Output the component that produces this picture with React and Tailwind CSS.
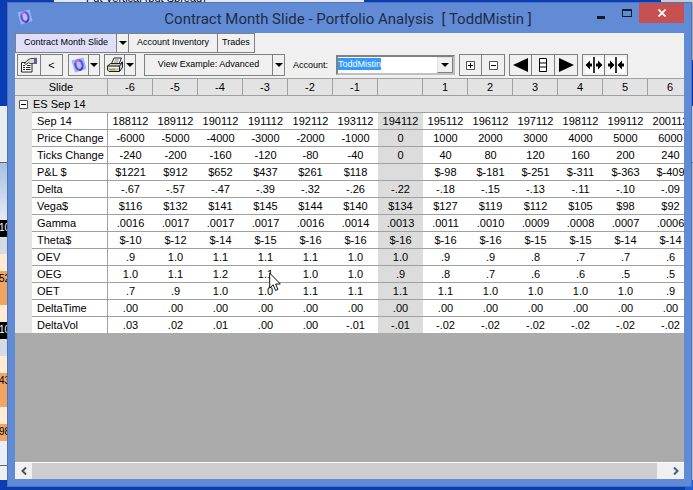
import { useState } from "react";

const SLIDES = ["-6", "-5", "-4", "-3", "-2", "-1", "", "1", "2", "3", "4", "5", "6"];

// Index of the current-price column, which is shaded
const CENTER = 6;

const ROWS = [
  { label: "Sep 14", values: ["188112", "189112", "190112", "191112", "192112", "193112", "194112", "195112", "196112", "197112", "198112", "199112", "200112"] },
  { label: "Price Change", values: ["-6000", "-5000", "-4000", "-3000", "-2000", "-1000", "0", "1000", "2000", "3000", "4000", "5000", "6000"] },
  { label: "Ticks Change", values: ["-240", "-200", "-160", "-120", "-80", "-40", "0", "40", "80", "120", "160", "200", "240"] },
  { label: "P&L $", values: ["$1221", "$912", "$652", "$437", "$261", "$118", "", "$-98", "$-181", "$-251", "$-311", "$-363", "$-409"] },
  { label: "Delta", values: ["-.67", "-.57", "-.47", "-.39", "-.32", "-.26", "-.22", "-.18", "-.15", "-.13", "-.11", "-.10", "-.09"] },
  { label: "Vega$", values: ["$116", "$132", "$141", "$145", "$144", "$140", "$134", "$127", "$119", "$112", "$105", "$98", "$92"] },
  { label: "Gamma", values: [".0016", ".0017", ".0017", ".0017", ".0016", ".0014", ".0013", ".0011", ".0010", ".0009", ".0008", ".0007", ".0006"] },
  { label: "Theta$", values: ["$-10", "$-12", "$-14", "$-15", "$-16", "$-16", "$-16", "$-16", "$-16", "$-15", "$-15", "$-14", "$-14"] },
  { label: "OEV", values: [".9", "1.0", "1.1", "1.1", "1.1", "1.0", "1.0", ".9", ".9", ".8", ".7", ".7", ".6"] },
  { label: "OEG", values: ["1.0", "1.1", "1.2", "1.1", "1.0", "1.0", ".9", ".8", ".7", ".6", ".6", ".5", ".5"] },
  { label: "OET", values: [".7", ".9", "1.0", "1.0", "1.1", "1.1", "1.1", "1.1", "1.0", "1.0", "1.0", "1.0", ".9"] },
  { label: "DeltaTime", values: [".00", ".00", ".00", ".00", ".00", ".00", ".00", ".00", ".00", ".00", ".00", ".00", ".00"] },
  { label: "DeltaVol", values: [".03", ".02", ".01", ".00", ".00", "-.01", "-.01", "-.02", "-.02", "-.02", "-.02", "-.02", "-.02"] },
];

/* ---------------- Icons ---------------- */

function LogoIcon({ className }) {
  return (
    <svg viewBox="0 0 16 16" className={className} aria-hidden="true">
      <path d="M.5 3.500 12.500.5 15.500 12 4 15.500Z" fill="#86c0f7" />
      <ellipse cx="8" cy="8" rx="3.500" ry="4.900" transform="rotate(-14 8 8)" fill="#a4cdfb" stroke="#8a3ad6" strokeWidth="2.200" />
      <path d="M4.800 6C5 4 6.500 2.800 8.200 2.900" fill="none" stroke="#d86ae0" strokeWidth="1.200" />
      <path d="M11.300 9.800C10.900 12 9.800 12.900 8.400 13.100" fill="none" stroke="#4a2fc8" strokeWidth="1.200" />
    </svg>
  );
}

function CaretDown() {
  return (
    <svg viewBox="0 0 8 4" className="h-1 w-2" aria-hidden="true">
      <path d="M0 0H8L4 4Z" fill="#000" />
    </svg>
  );
}

function PropertiesIcon() {
  return (
    <svg viewBox="0 0 18 16" className="h-4 w-[18px]" aria-hidden="true">
      <path d="M1.500 5.500H12V15H1.500Z" fill="#fff" stroke="#222" />
      <path d="M3 8.500H5M3 10.500H5M3 12.500H5M6 10.500H10.500M6 12.500H10.500M7 8.500H10.500" stroke="#222" />
      <path d="M4.500 6.500 7 3.500 10.500 1.500H14.500V6L11 6.800 8.500 5.800 6 7.500Z" fill="#d9d9d9" stroke="#333" strokeWidth=".9" />
      <path d="M14 .8H17V7H14Z" fill="#5f5fa0" />
    </svg>
  );
}

function PrinterIcon() {
  return (
    <svg viewBox="0 0 18 16" className="h-4 w-[18px]" aria-hidden="true">
      <path d="M5.500 6.500 8 1H15.500L13 7Z" fill="#fff" stroke="#222" />
      <path d="M8.500 3H13M7.800 5H12.200" stroke="#555" strokeWidth=".8" />
      <path d="M1.500 9 4.500 6.500H14.500L16.500 4.800V10.500L13.500 14.500H3L1.500 13Z" fill="#c9c9c9" stroke="#222" />
      <path d="M1.500 9H13.500L16.500 5.500M13.500 9V14.500" fill="none" stroke="#222" />
      <path d="M3.500 12.500H9" stroke="#b3a800" strokeWidth="1.400" />
      <path d="M2.500 10.500H12.500" stroke="#fff" />
    </svg>
  );
}

function BoxIcon({ plus }) {
  return (
    <svg viewBox="0 0 9 9" className="size-[9px]" aria-hidden="true">
      <path d="M.5.5H8.500V8.500H.5Z" fill="#fff" stroke="#555" />
      <path d={plus ? "M2 4.500H7M4.500 2V7" : "M2 4.500H7"} stroke="#000" />
    </svg>
  );
}

function ArrowIcon({ right }) {
  return (
    <svg viewBox="0 0 16 14" className="h-3.5 w-4" aria-hidden="true">
      <path d={right ? "M1 0V14L16 7Z" : "M15 0V14L0 7Z"} fill="#000" />
    </svg>
  );
}

function CenterIcon() {
  return (
    <svg viewBox="0 0 8 14" className="h-3.5 w-2" aria-hidden="true">
      <path d="M.5.5H7.500V13.500H.5ZM.5 5H7.500M.5 9H7.500" fill="#fff" stroke="#000" />
    </svg>
  );
}

function WidthIcon({ inward }) {
  return (
    <svg viewBox="0 0 18 16" className="h-4 w-[18px]" aria-hidden="true">
      <path d="M0 0H18V16H0Z" fill="#fff" />
      <path d="M9 0V16" stroke="#000" strokeWidth="1.600" />
      <path
        d={inward
          ? "M1 6.500H3V3.500L7.500 8 3 12.500V9.500H1ZM17 6.500H15V3.500L10.500 8 15 12.500V9.500H17Z"
          : "M.5 8 5 3.500V6.500H7V9.500H5V12.500ZM17.500 8 13 3.500V6.500H11V9.500H13V12.500Z"}
        fill="#000"
      />
    </svg>
  );
}

/* ---------------- Building blocks ---------------- */

function ToolButton({ label, className = "", children }) {
  return (
    <button
      aria-label={label}
      className={`flex h-[22px] shrink-0 items-center justify-center border border-[#808080] bg-[#f0f0f0] not-first:border-l-0 ${className}`}
    >
      {children}
    </button>
  );
}

function Tab({ active, onClick, className, children }) {
  return (
    <button
      role="tab"
      aria-selected={active}
      onClick={onClick}
      className={`h-5 border-r border-y border-[#808080] whitespace-nowrap ${active ? "bg-[#e0dffa]" : ""} ${className}`}
    >
      {children}
    </button>
  );
}

// Parts of the windows that show behind the main one
function Backdrop() {
  return (
    <div aria-hidden="true" className="absolute inset-0 flex flex-col overflow-hidden bg-[#0a3cb4]">
      <div className="flex h-[3px] shrink-0 overflow-hidden">
        <div className="w-[54px]" />
        <div className="w-[310px] bg-[#e4e8ee] pl-8 text-[11px] leading-3">
          <div className="-mt-2">Put Vertical (put Spread)</div>
        </div>
        <div className="flex-1" />
        <div className="w-8 bg-[#c8ccd4]" />
      </div>

      <div className="flex flex-1 justify-between">
        {/* Left edge */}
        <div className="flex w-2 flex-col overflow-hidden text-[10px] leading-4">
          <div className="h-[103px] shrink-0" />
          <div className="h-[57px] shrink-0 border-b border-[#606870] bg-[#e8eef0]" />
          <div className="h-[57px] shrink-0 bg-linear-to-b from-[#a9bfe0] to-[#e6ebf2]" />
          <div className="h-[17px] shrink-0 bg-black -indent-px text-white">10</div>
          <div className="h-[17px] shrink-0 bg-[#d5dbe3]" />
          <div className="h-[17px] shrink-0 bg-[#fdebd3]" />
          <div className="h-[34px] shrink-0 bg-[#f2a561] -indent-px">52</div>
          <div className="h-[17px] shrink-0 bg-[#fdebd3]" />
          <div className="h-[17px] shrink-0 bg-black -indent-px text-white">10</div>
          <div className="h-[17px] shrink-0 bg-[#d5dbe3]" />
          <div className="h-[17px] shrink-0 bg-[#fdebd3]" />
          <div className="h-[34px] shrink-0 bg-[#f2a561] -indent-px">43</div>
          <div className="h-[17px] shrink-0 bg-[#fdebd3]" />
          <div className="h-[17px] shrink-0 bg-[#f2a561] -indent-px">98</div>
          <div className="h-[25px] shrink-0 border-b border-[#606870] bg-[#e9eff5]" />
          <div className="h-[14px] shrink-0 bg-[#eef0f3]" />
        </div>

        {/* Right edge */}
        <div className="flex w-2 flex-col">
          <div className="h-[57px] bg-[#a6a9b0]" />
          <div className="h-[46px]" />
          <div className="h-[57px] border-b border-[#606870] bg-[#c3cee0]" />
          <div className="flex-1 bg-[#b9c0cc]" />
          <div className="h-2.5 bg-[#1560d8]" />
        </div>
      </div>
    </div>
  );
}

function TitleBar() {
  return (
    <header className="flex h-[30px] items-start">
      <LogoIcon className="mt-1.5 ml-0.5 size-4 shrink-0" />
      <h1 className="flex-1 pt-1 pl-20 text-center font-[Roboto,sans-serif] text-[15px] leading-6 whitespace-pre text-[#1f2c48]">
        {"Contract Month Slide - Portfolio Analysis  [ ToddMistin ]"}
      </h1>
      <div className="flex w-[101px] shrink-0 justify-end">
        <button aria-label="Minimize" className="flex h-5 w-7 items-center justify-center">
          <span className="mt-2 h-[3px] w-2 bg-[#1c1c1c]" />
        </button>
        <button aria-label="Maximize" className="flex h-5 w-6 items-center justify-center">
          <span className="h-2 w-2.5 border border-t-2 border-[#1c1c1c]" />
        </button>
        <button aria-label="Close" className="flex h-5 w-[45px] items-center justify-center bg-[#c75050]">
          <svg viewBox="0 0 8 8" className="size-2" aria-hidden="true">
            <path d="M.5.5 7.500 7.500M7.500.5.5 7.500" stroke="#fff" strokeWidth="1.800" />
          </svg>
        </button>
      </div>
    </header>
  );
}

function Toolbar() {
  const [account, setAccount] = useState("ToddMistin");

  return (
    <div className="flex h-[25px] items-start gap-1 pt-px pl-0.5">
      <div className="flex">
        <ToolButton label="Properties" className="w-6"><PropertiesIcon /></ToolButton>
        <ToolButton label="Back" className="w-[22px] text-[11px]">&lt;</ToolButton>
      </div>
      <div className="ml-px flex">
        <ToolButton label="Analysis" className="w-[21px]"><LogoIcon className="size-4" /></ToolButton>
        <ToolButton label="Analysis options" className="w-[11px]"><CaretDown /></ToolButton>
      </div>
      <div className="flex">
        <ToolButton label="Print" className="w-[21px]"><PrinterIcon /></ToolButton>
        <ToolButton label="Print options" className="w-[11px]"><CaretDown /></ToolButton>
      </div>
      <div className="ml-1 flex">
        <ToolButton className="w-[129px] whitespace-nowrap">View Example: Advanced</ToolButton>
        <ToolButton label="Choose view" className="w-3"><CaretDown /></ToolButton>
      </div>
      <label htmlFor="account" className="ml-1 w-[39px] leading-[22px]">Account:</label>
      <div className="mt-px flex h-5 w-[119px] border-2 border-[#808080] border-r-[#c0c0c0] border-b-[#c0c0c0] bg-white">
        <div className="flex-1 pt-px">
          <input
            id="account"
            value={account}
            onChange={(e) => setAccount(e.target.value)}
            className="block h-3 field-sizing-content bg-[#3399ff] leading-3 text-white outline-none"
          />
        </div>
        <button aria-label="Open account list" className="flex w-4 items-center justify-center border border-[#e0e0e0] border-r-[#808080] border-b-[#808080] bg-[#f0f0f0]">
          <CaretDown />
        </button>
      </div>
      <div className="flex">
        <ToolButton label="Expand all" className="w-[23px]"><BoxIcon plus /></ToolButton>
        <ToolButton label="Collapse all" className="w-[23px]"><BoxIcon /></ToolButton>
      </div>
      <div className="flex">
        <ToolButton label="Slide left" className="w-[23px]"><ArrowIcon /></ToolButton>
        <ToolButton label="Center" className="w-[23px]"><CenterIcon /></ToolButton>
        <ToolButton label="Slide right" className="w-[23px]"><ArrowIcon right /></ToolButton>
      </div>
      <div className="flex">
        <ToolButton label="Widen columns" className="w-[23px]"><WidthIcon /></ToolButton>
        <ToolButton label="Narrow columns" className="w-[23px]"><WidthIcon inward /></ToolButton>
      </div>
    </div>
  );
}

function SlideTable() {
  return (
    <table className="w-[678px] table-fixed border-separate border-spacing-0 text-[11px] leading-4">
      <colgroup>
        <col className="w-[17px]" />
        <col className="w-[76px]" />
        {SLIDES.map((slide) => <col key={slide} className="w-[45px]" />)}
      </colgroup>
      <thead>
        <tr className="bg-[#e3e3e3]">
          <th colSpan={2} className="h-[17px] border-t border-r border-[#a0a0a0] p-0 font-normal">Slide</th>
          {SLIDES.map((slide) => (
            <th key={slide} className="border-t border-r border-[#a0a0a0] p-0 font-normal">{slide}</th>
          ))}
        </tr>
      </thead>
      <tbody>
        <tr className="bg-[#e3e3e3]">
          <th colSpan={15} className="h-[17px] border-t border-[#a0a0a0] p-0 text-left font-normal">
            <span className="flex h-4 items-center gap-[5px] pl-1">
              <button aria-label="Collapse ES Sep 14"><BoxIcon /></button>
              ES Sep 14
            </span>
          </th>
        </tr>
        {ROWS.map((row) => (
          <tr key={row.label} className="bg-white">
            <td className="h-[17px] bg-[#e3e3e3] p-0" />
            <th className="border-t border-r border-[#a0a0a0] p-0 pl-[5px] text-left font-normal whitespace-nowrap">
              {row.label}
            </th>
            {row.values.map((value, i) => (
              <td
                key={i}
                className={`border-t border-[#a0a0a0] p-0 text-center ${i === CENTER ? "bg-[#dcdcdc]" : ""}`}
              >
                {value}
              </td>
            ))}
          </tr>
        ))}
      </tbody>
    </table>
  );
}

function ScrollBar() {
  return (
    <div className="flex h-[17px] shrink-0 border-t border-white bg-[#f0f0f0]">
      <button aria-label="Scroll left" className="flex w-[17px] items-center justify-center">
        <svg viewBox="0 0 6 8" className="h-2 w-1.5" aria-hidden="true">
          <path d="M5 .5 1.500 4 5 7.500" fill="none" stroke="#505050" strokeWidth="2" />
        </svg>
      </button>
      <div className="flex-1 pr-2.5">
        <div className="h-full bg-[#cdcdcd]" />
      </div>
      <button aria-label="Scroll right" className="flex w-[17px] items-center justify-center">
        <svg viewBox="0 0 6 8" className="h-2 w-1.5" aria-hidden="true">
          <path d="M1 .5 4.500 4 1 7.500" fill="none" stroke="#3f5f88" strokeWidth="2" />
        </svg>
      </button>
    </div>
  );
}

function Cursor() {
  return (
    <svg viewBox="0 0 12 20" className="pointer-events-none absolute top-[272px] left-[269px] h-5 w-3" aria-hidden="true">
      <path d="M.7 1V16L4.200 12.800 6.600 18.500 9 17.400 6.600 12H11.300Z" fill="#fff" stroke="#111" strokeWidth="1" />
    </svg>
  );
}

/* ---------------- Main window ---------------- */

export default function App() {
  const [tab, setTab] = useState("slide");

  return (
    <div className="relative flex min-h-screen flex-col overflow-hidden pt-0.5 pr-px pb-[3px] pl-[7px] font-['Liberation_Sans',Arial,sans-serif] text-[9px] text-black">
      <Backdrop />

      <main className="relative flex min-w-0 flex-1 flex-col border border-[#4a72bd] bg-[#628bd6] px-[7px] pb-[7px]">
        <TitleBar />

        <div className="flex flex-1 flex-col overflow-hidden bg-[#f0f0f0]">
          {/* Tabs */}
          <div role="tablist" className="flex border-l border-[#808080]">
            <Tab active={tab === "slide"} onClick={() => setTab("slide")} className="px-2">Contract Month Slide</Tab>
            <button aria-label="More slides" className="flex w-3 items-center justify-center border-r border-y border-[#808080]">
              <CaretDown />
            </button>
            <Tab active={tab === "inventory"} onClick={() => setTab("inventory")} className="px-2">Account Inventory</Tab>
            <Tab active={tab === "trades"} onClick={() => setTab("trades")} className="px-1">Trades</Tab>
          </div>

          <Toolbar />

          <div className="flex-1 overflow-hidden bg-[#ababab]">
            <SlideTable />
          </div>

          <ScrollBar />
        </div>
      </main>

      <Cursor />
    </div>
  );
}
